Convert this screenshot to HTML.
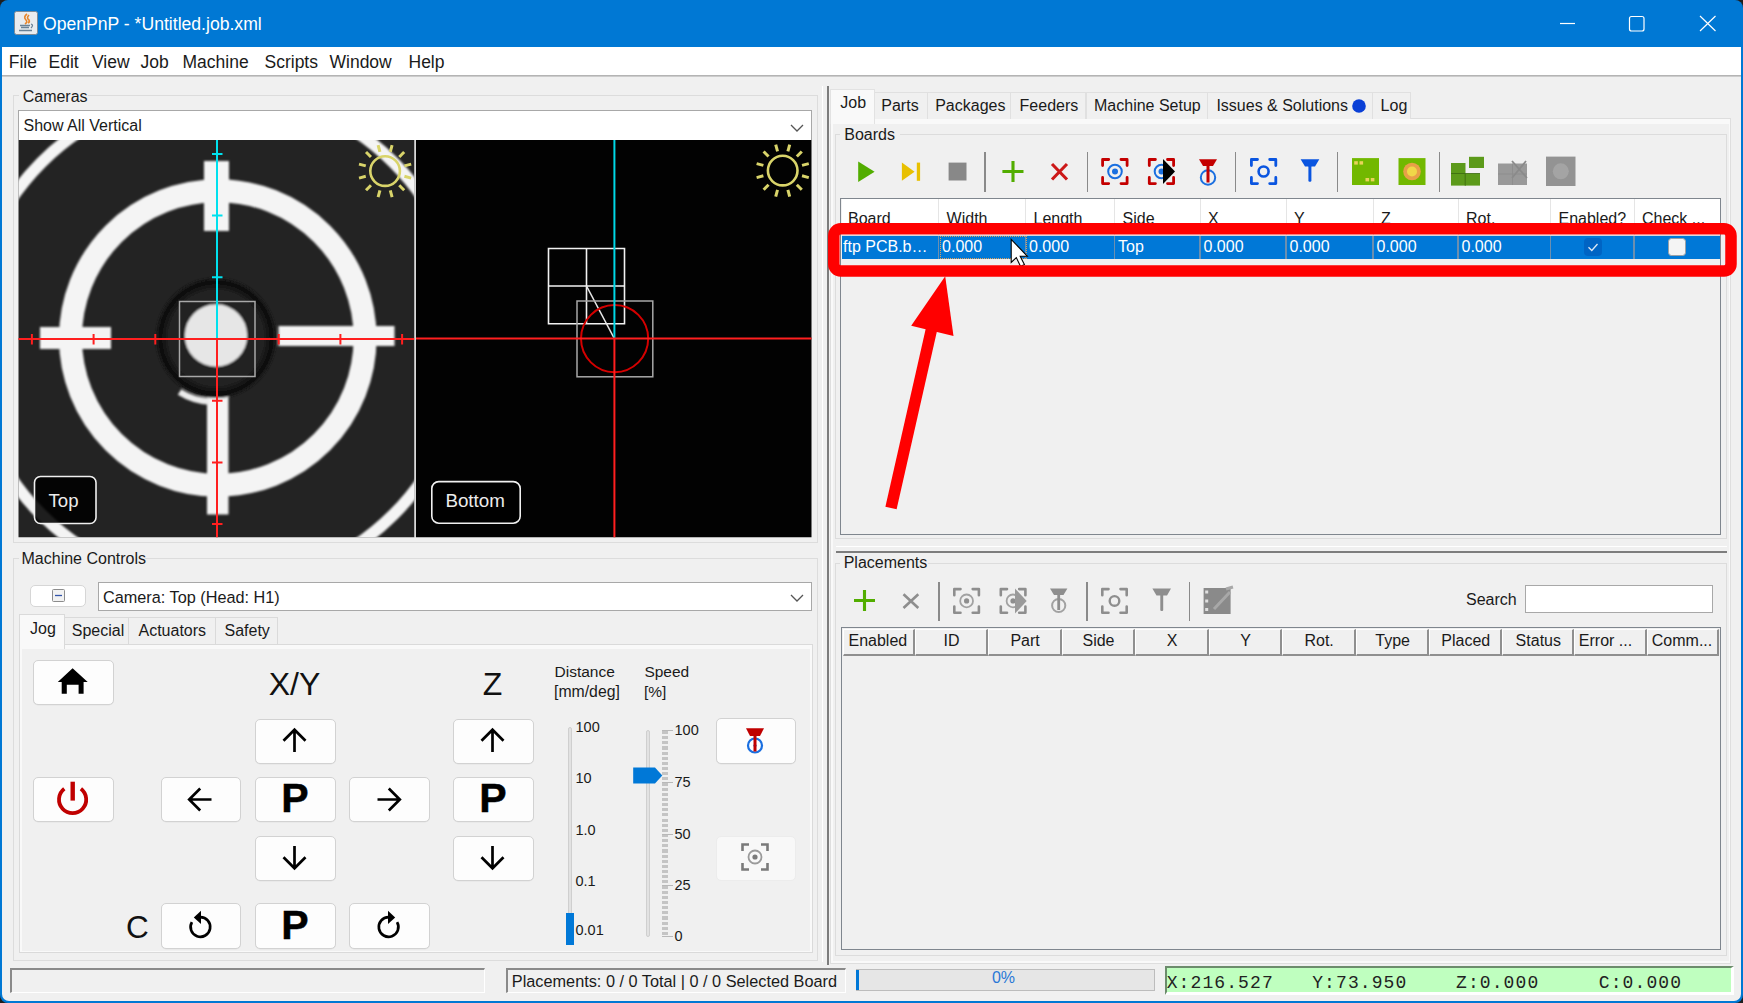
<!DOCTYPE html>
<html><head><meta charset="utf-8">
<style>
*{margin:0;padding:0;box-sizing:border-box}
html,body{width:1743px;height:1003px;overflow:hidden;background:#1e1e1e}
body{font-family:"Liberation Sans",sans-serif;font-size:16px;color:#000;position:relative}
.a{position:absolute}
.t{position:absolute;white-space:nowrap;line-height:1}
svg{position:absolute;overflow:visible}
</style></head><body>

<div class="a" style="left:0px;top:0px;width:1743px;height:1003px;background:#0078d4;border-radius:8px"></div>
<div class="a" style="left:2px;top:47px;width:1739px;height:954px;background:#f0f0f0;border-radius:0 0 7px 7px"></div>
<svg style="left:0;top:0" width="1743" height="47" viewBox="0 0 1743 47"><rect x="14.5" y="11.5" width="23" height="23" rx="2" fill="#e9ecef" stroke="#7d8b97" stroke-width="1"/><path d="M27 14 q-4 3 -1 6 q2 2 -1 4 M29 15 q-3 3 0 5 q1 2 -1 3" stroke="#e8862a" stroke-width="1.6" fill="none"/><path d="M20 25.5 h10 M21 27.5 h8 M19 30.5 h13 M31 24 q3 1 0 4" stroke="#6a8296" stroke-width="1.3" fill="none"/><line x1="1560" y1="23.5" x2="1575" y2="23.5" stroke="#fff" stroke-width="1.2"/><rect x="1629.5" y="16.5" width="14.5" height="14.5" rx="2" fill="none" stroke="#fff" stroke-width="1.2"/><path d="M1700 16 L1715.5 31 M1715.5 16 L1700 31" stroke="#fff" stroke-width="1.2"/></svg>
<div class="t" style="left:43.00px;top:16.40px;font-size:17.6px;color:#fff;font-weight:normal;font-family:'Liberation Sans',sans-serif;">OpenPnP - *Untitled.job.xml</div>
<div class="a" style="left:2px;top:47px;width:1739px;height:28px;background:#fff"></div>
<div class="a" style="left:2px;top:75px;width:1739px;height:2px;background:linear-gradient(#a8a8a8,#d8d8d8)"></div>
<div class="t" style="left:8.80px;top:53.98px;font-size:17.5px;color:#1a1a1a;font-weight:normal;font-family:'Liberation Sans',sans-serif;">File</div>
<div class="t" style="left:48.50px;top:53.98px;font-size:17.5px;color:#1a1a1a;font-weight:normal;font-family:'Liberation Sans',sans-serif;">Edit</div>
<div class="t" style="left:92.00px;top:53.98px;font-size:17.5px;color:#1a1a1a;font-weight:normal;font-family:'Liberation Sans',sans-serif;">View</div>
<div class="t" style="left:140.50px;top:53.98px;font-size:17.5px;color:#1a1a1a;font-weight:normal;font-family:'Liberation Sans',sans-serif;">Job</div>
<div class="t" style="left:182.50px;top:53.98px;font-size:17.5px;color:#1a1a1a;font-weight:normal;font-family:'Liberation Sans',sans-serif;">Machine</div>
<div class="t" style="left:264.50px;top:53.98px;font-size:17.5px;color:#1a1a1a;font-weight:normal;font-family:'Liberation Sans',sans-serif;">Scripts</div>
<div class="t" style="left:329.50px;top:53.98px;font-size:17.5px;color:#1a1a1a;font-weight:normal;font-family:'Liberation Sans',sans-serif;">Window</div>
<div class="t" style="left:408.50px;top:53.98px;font-size:17.5px;color:#1a1a1a;font-weight:normal;font-family:'Liberation Sans',sans-serif;">Help</div>
<div class="a" style="left:13px;top:95px;width:805px;height:448px;border:1px solid #dcdcdc"></div>
<div class="a" style="left:19px;top:90px;width:69px;height:10px;background:#f0f0f0"></div>
<div class="t" style="left:22.70px;top:88.75px;font-size:16px;color:#1a1a1a;font-weight:normal;font-family:'Liberation Sans',sans-serif;">Cameras</div>
<div class="a" style="left:18px;top:110px;width:794px;height:30px;background:#fff;border:1px solid #a8a8a8;border-bottom:0"></div>
<div class="t" style="left:23.50px;top:118.45px;font-size:16px;color:#1a1a1a;font-weight:normal;font-family:'Liberation Sans',sans-serif;">Show All Vertical</div>
<svg style="left:0;top:0" width="1" height="1"><path d="M791 125 L797 131 L803 125" stroke="#555" stroke-width="1.3" fill="none"/></svg>
<svg style="left:0;top:0" width="1743" height="1003" viewBox="0 0 1743 1003"><defs><clipPath id="c1"><rect x="18.5" y="140" width="396" height="397.3"/></clipPath><clipPath id="c2"><rect x="416" y="140" width="395.5" height="397.3"/></clipPath><filter id="bl" x="-10%" y="-10%" width="120%" height="120%"><feGaussianBlur stdDeviation="1.2"/></filter><radialGradient id="hole" cx="0.5" cy="0.5" r="0.5"><stop offset="0.8" stop-color="#202020"/><stop offset="0.93" stop-color="#0c0c0c"/><stop offset="1" stop-color="#1a1a1a"/></radialGradient></defs><g clip-path="url(#c1)"><rect x="18" y="140" width="397" height="398" fill="#232323"/><g filter="url(#bl)"><circle cx="217.5" cy="338.5" r="249" fill="none" stroke="#f4f4f4" stroke-width="12"/><circle cx="217.8" cy="338" r="147.3" fill="none" stroke="#f4f4f4" stroke-width="23"/><rect x="204" y="161" width="25" height="70" fill="#f4f4f4"/><rect x="40" y="327" width="71" height="22" fill="#f4f4f4"/><rect x="278.5" y="326" width="116" height="20" fill="#f4f4f4"/><rect x="207" y="380" width="21.5" height="134.5" fill="#f4f4f4"/><circle cx="216" cy="338" r="60" fill="url(#hole)"/><circle cx="216" cy="335.5" r="31.2" fill="#e6e6e6"/><path d="M179.5 392 A64 64 0 0 0 209 401.5" fill="none" stroke="#ececec" stroke-width="6.5"/></g><rect x="179.5" y="301.5" width="75.5" height="75" fill="none" stroke="#a8a8a8" stroke-width="1.5"/><line x1="217" y1="140" x2="217" y2="339" stroke="#00e1ee" stroke-width="2"/><line x1="18" y1="339" x2="415" y2="339" stroke="#ff1f1f" stroke-width="2"/><line x1="217" y1="339" x2="217" y2="538" stroke="#ff1f1f" stroke-width="2"/><line x1="212" y1="277.3" x2="222.5" y2="277.3" stroke="#00e1ee" stroke-width="2"/><line x1="212" y1="400.7" x2="222.5" y2="400.7" stroke="#ff1f1f" stroke-width="2"/><line x1="155.3" y1="334" x2="155.3" y2="344.5" stroke="#ff1f1f" stroke-width="2"/><line x1="278.7" y1="334" x2="278.7" y2="344.5" stroke="#ff1f1f" stroke-width="2"/><line x1="212" y1="215.6" x2="222.5" y2="215.6" stroke="#00e1ee" stroke-width="2"/><line x1="212" y1="462.4" x2="222.5" y2="462.4" stroke="#ff1f1f" stroke-width="2"/><line x1="93.6" y1="334" x2="93.6" y2="344.5" stroke="#ff1f1f" stroke-width="2"/><line x1="340.4" y1="334" x2="340.4" y2="344.5" stroke="#ff1f1f" stroke-width="2"/><line x1="212" y1="153.9" x2="222.5" y2="153.9" stroke="#00e1ee" stroke-width="2"/><line x1="212" y1="524.1" x2="222.5" y2="524.1" stroke="#ff1f1f" stroke-width="2"/><line x1="31.9" y1="334" x2="31.9" y2="344.5" stroke="#ff1f1f" stroke-width="2"/><line x1="402.1" y1="334" x2="402.1" y2="344.5" stroke="#ff1f1f" stroke-width="2"/><circle cx="385.1" cy="171.1" r="14.8" fill="none" stroke="#d9d46a" stroke-width="2.6"/><line x1="404.42" y1="176.28" x2="411.18" y2="178.09" stroke="#d9d46a" stroke-width="3"/><line x1="399.24" y1="185.24" x2="404.19" y2="190.19" stroke="#d9d46a" stroke-width="3"/><line x1="390.28" y1="190.42" x2="392.09" y2="197.18" stroke="#d9d46a" stroke-width="3"/><line x1="379.92" y1="190.42" x2="378.11" y2="197.18" stroke="#d9d46a" stroke-width="3"/><line x1="370.96" y1="185.24" x2="366.01" y2="190.19" stroke="#d9d46a" stroke-width="3"/><line x1="365.78" y1="176.28" x2="359.02" y2="178.09" stroke="#d9d46a" stroke-width="3"/><line x1="365.78" y1="165.92" x2="359.02" y2="164.11" stroke="#d9d46a" stroke-width="3"/><line x1="370.96" y1="156.96" x2="366.01" y2="152.01" stroke="#d9d46a" stroke-width="3"/><line x1="379.92" y1="151.78" x2="378.11" y2="145.02" stroke="#d9d46a" stroke-width="3"/><line x1="390.28" y1="151.78" x2="392.09" y2="145.02" stroke="#d9d46a" stroke-width="3"/><line x1="399.24" y1="156.96" x2="404.19" y2="152.01" stroke="#d9d46a" stroke-width="3"/><line x1="404.42" y1="165.92" x2="411.18" y2="164.11" stroke="#d9d46a" stroke-width="3"/><rect x="34.5" y="476.5" width="61.5" height="47" rx="6" fill="rgba(0,0,0,0.88)" stroke="#f0f0f0" stroke-width="1.6"/></g><rect x="414.5" y="140" width="1.6" height="397.3" fill="#d8d8d8"/><g clip-path="url(#c2)"><rect x="416" y="140" width="396" height="398" fill="#020202"/><path d="M548.5 248.5 H624.5 V323.8 H548.5 Z M586.5 248.5 V323.8 M548.5 286 H624.5" fill="none" stroke="#f2f2f2" stroke-width="1.6"/><line x1="586.5" y1="286" x2="614.3" y2="338.5" stroke="#e8e8e8" stroke-width="1.6"/><rect x="577" y="301" width="75.8" height="75.8" fill="none" stroke="#a8a8a8" stroke-width="1.5"/><circle cx="614.6" cy="338.6" r="33.6" fill="none" stroke="#d40000" stroke-width="2"/><line x1="614.4" y1="140" x2="614.4" y2="338.5" stroke="#00d8e6" stroke-width="2"/><line x1="416" y1="338.5" x2="812" y2="338.5" stroke="#ff1f1f" stroke-width="2"/><line x1="614.4" y1="338.5" x2="614.4" y2="538" stroke="#ff1f1f" stroke-width="2"/><circle cx="782.7" cy="170.6" r="14.8" fill="none" stroke="#d9d46a" stroke-width="2.6"/><line x1="802.02" y1="175.78" x2="808.78" y2="177.59" stroke="#d9d46a" stroke-width="3"/><line x1="796.84" y1="184.74" x2="801.79" y2="189.69" stroke="#d9d46a" stroke-width="3"/><line x1="787.88" y1="189.92" x2="789.69" y2="196.68" stroke="#d9d46a" stroke-width="3"/><line x1="777.52" y1="189.92" x2="775.71" y2="196.68" stroke="#d9d46a" stroke-width="3"/><line x1="768.56" y1="184.74" x2="763.61" y2="189.69" stroke="#d9d46a" stroke-width="3"/><line x1="763.38" y1="175.78" x2="756.62" y2="177.59" stroke="#d9d46a" stroke-width="3"/><line x1="763.38" y1="165.42" x2="756.62" y2="163.61" stroke="#d9d46a" stroke-width="3"/><line x1="768.56" y1="156.46" x2="763.61" y2="151.51" stroke="#d9d46a" stroke-width="3"/><line x1="777.52" y1="151.28" x2="775.71" y2="144.52" stroke="#d9d46a" stroke-width="3"/><line x1="787.88" y1="151.28" x2="789.69" y2="144.52" stroke="#d9d46a" stroke-width="3"/><line x1="796.84" y1="156.46" x2="801.79" y2="151.51" stroke="#d9d46a" stroke-width="3"/><line x1="802.02" y1="165.42" x2="808.78" y2="163.61" stroke="#d9d46a" stroke-width="3"/><rect x="431.8" y="481.6" width="88.4" height="41.6" rx="7" fill="#000" stroke="#f0f0f0" stroke-width="1.6"/></g></svg>
<div class="t" style="left:48.50px;top:492.15px;font-size:18.6px;color:#ececec;font-weight:normal;font-family:'Liberation Sans',sans-serif;">Top</div>
<div class="t" style="left:445.40px;top:491.98px;font-size:18.8px;color:#ececec;font-weight:normal;font-family:'Liberation Sans',sans-serif;">Bottom</div>
<div class="a" style="left:13px;top:558px;width:805px;height:403px;border:1px solid #dcdcdc"></div>
<div class="a" style="left:19px;top:552px;width:126px;height:12px;background:#f0f0f0"></div>
<div class="t" style="left:21.50px;top:550.95px;font-size:16px;color:#1a1a1a;font-weight:normal;font-family:'Liberation Sans',sans-serif;">Machine Controls</div>
<div class="a" style="left:30px;top:585px;width:56px;height:22px;background:#fff;border:1px solid #d6d6d6;border-radius:5px"></div>
<svg style="left:0;top:0" width="1" height="1"><rect x="52.5" y="589.5" width="12" height="12" rx="1" fill="#f2f2f2" stroke="#8c8c8c" stroke-width="1"/><line x1="55" y1="595.5" x2="62" y2="595.5" stroke="#3355aa" stroke-width="1.3"/></svg>
<div class="a" style="left:98px;top:581.5px;width:714px;height:29.5px;background:#fff;border:1px solid #a8a8a8"></div>
<div class="t" style="left:103.00px;top:589.24px;font-size:16.25px;color:#1a1a1a;font-weight:normal;font-family:'Liberation Sans',sans-serif;">Camera: Top (Head: H1)</div>
<svg style="left:0;top:0" width="1" height="1"><path d="M791 595 L797 601 L803 595" stroke="#555" stroke-width="1.3" fill="none"/></svg>
<div class="a" style="left:19px;top:643.5px;width:793.5px;height:309.5px;background:#f9f9f9;border:1px solid #dadada"></div>
<div class="a" style="left:21.5px;top:648.5px;width:788.0px;height:302.0px;background:#f0f0f0"></div>
<div class="a" style="left:64px;top:616.5px;width:64.5px;height:27.5px;background:#f0f0f0;border:1px solid #dadada;border-bottom:0"></div>
<div class="a" style="left:128px;top:616.5px;width:87.5px;height:27.5px;background:#f0f0f0;border:1px solid #dadada;border-bottom:0"></div>
<div class="a" style="left:215px;top:616.5px;width:62.5px;height:27.5px;background:#f0f0f0;border:1px solid #dadada;border-bottom:0"></div>
<div class="a" style="left:19px;top:613.5px;width:45.5px;height:35.0px;background:#f9f9f9;border:1px solid #dadada;border-bottom:0"></div>
<div class="t" style="left:30.00px;top:621.15px;font-size:16px;color:#1a1a1a;font-weight:normal;font-family:'Liberation Sans',sans-serif;">Jog</div>
<div class="t" style="left:71.80px;top:622.75px;font-size:16px;color:#1a1a1a;font-weight:normal;font-family:'Liberation Sans',sans-serif;">Special</div>
<div class="t" style="left:138.50px;top:622.75px;font-size:16px;color:#1a1a1a;font-weight:normal;font-family:'Liberation Sans',sans-serif;">Actuators</div>
<div class="t" style="left:224.50px;top:622.75px;font-size:16px;color:#1a1a1a;font-weight:normal;font-family:'Liberation Sans',sans-serif;">Safety</div>
<div class="a" style="left:33px;top:660px;width:80.5px;height:45.299999999999955px;background:#fdfdfd;border:1px solid #d2d2d2;border-radius:5px;box-shadow:0 0.5px 0.5px rgba(0,0,0,0.06)"></div>
<div class="a" style="left:255px;top:718.5px;width:80.5px;height:45.299999999999955px;background:#fdfdfd;border:1px solid #d2d2d2;border-radius:5px;box-shadow:0 0.5px 0.5px rgba(0,0,0,0.06)"></div>
<div class="a" style="left:453px;top:718.5px;width:80.5px;height:45.299999999999955px;background:#fdfdfd;border:1px solid #d2d2d2;border-radius:5px;box-shadow:0 0.5px 0.5px rgba(0,0,0,0.06)"></div>
<div class="a" style="left:33px;top:777.2px;width:80.5px;height:45.299999999999955px;background:#fdfdfd;border:1px solid #d2d2d2;border-radius:5px;box-shadow:0 0.5px 0.5px rgba(0,0,0,0.06)"></div>
<div class="a" style="left:160.5px;top:777.2px;width:80.5px;height:45.299999999999955px;background:#fdfdfd;border:1px solid #d2d2d2;border-radius:5px;box-shadow:0 0.5px 0.5px rgba(0,0,0,0.06)"></div>
<div class="a" style="left:255px;top:777.2px;width:80.5px;height:45.299999999999955px;background:#fdfdfd;border:1px solid #d2d2d2;border-radius:5px;box-shadow:0 0.5px 0.5px rgba(0,0,0,0.06)"></div>
<div class="a" style="left:349.3px;top:777.2px;width:80.5px;height:45.299999999999955px;background:#fdfdfd;border:1px solid #d2d2d2;border-radius:5px;box-shadow:0 0.5px 0.5px rgba(0,0,0,0.06)"></div>
<div class="a" style="left:453px;top:777.2px;width:80.5px;height:45.299999999999955px;background:#fdfdfd;border:1px solid #d2d2d2;border-radius:5px;box-shadow:0 0.5px 0.5px rgba(0,0,0,0.06)"></div>
<div class="a" style="left:255px;top:835.5px;width:80.5px;height:45.299999999999955px;background:#fdfdfd;border:1px solid #d2d2d2;border-radius:5px;box-shadow:0 0.5px 0.5px rgba(0,0,0,0.06)"></div>
<div class="a" style="left:453px;top:835.5px;width:80.5px;height:45.299999999999955px;background:#fdfdfd;border:1px solid #d2d2d2;border-radius:5px;box-shadow:0 0.5px 0.5px rgba(0,0,0,0.06)"></div>
<div class="a" style="left:160.5px;top:903.3px;width:80.5px;height:45.299999999999955px;background:#fdfdfd;border:1px solid #d2d2d2;border-radius:5px;box-shadow:0 0.5px 0.5px rgba(0,0,0,0.06)"></div>
<div class="a" style="left:255px;top:903.3px;width:80.5px;height:45.299999999999955px;background:#fdfdfd;border:1px solid #d2d2d2;border-radius:5px;box-shadow:0 0.5px 0.5px rgba(0,0,0,0.06)"></div>
<div class="a" style="left:349.3px;top:903.3px;width:80.5px;height:45.299999999999955px;background:#fdfdfd;border:1px solid #d2d2d2;border-radius:5px;box-shadow:0 0.5px 0.5px rgba(0,0,0,0.06)"></div>
<div class="a" style="left:715.6px;top:718.3px;width:80.5px;height:45.299999999999955px;background:#fdfdfd;border:1px solid #d2d2d2;border-radius:5px;box-shadow:0 0.5px 0.5px rgba(0,0,0,0.06)"></div>
<div class="a" style="left:715.6px;top:835.6px;width:80.5px;height:45.299999999999955px;background:#f8f8f8;border:1px solid #ececec;border-radius:5px"></div>
<div class="t" style="left:-5.50px;width:600px;text-align:center;top:668.31px;font-size:32px;color:#111;font-weight:normal;font-family:'Liberation Sans',sans-serif;">X/Y</div>
<div class="t" style="left:192.50px;width:600px;text-align:center;top:668.31px;font-size:32px;color:#111;font-weight:normal;font-family:'Liberation Sans',sans-serif;">Z</div>
<div class="t" style="left:126.00px;top:911.53px;font-size:31.5px;color:#111;font-weight:normal;font-family:'Liberation Sans',sans-serif;">C</div>
<div class="t" style="left:-5.00px;width:600px;text-align:center;top:778.29px;font-size:41px;color:#000;font-weight:bold;font-family:'Liberation Sans',sans-serif;-webkit-text-stroke:0.5px #000">P</div>
<div class="t" style="left:193.00px;width:600px;text-align:center;top:778.29px;font-size:41px;color:#000;font-weight:bold;font-family:'Liberation Sans',sans-serif;-webkit-text-stroke:0.5px #000">P</div>
<div class="t" style="left:-5.00px;width:600px;text-align:center;top:904.79px;font-size:41px;color:#000;font-weight:bold;font-family:'Liberation Sans',sans-serif;-webkit-text-stroke:0.5px #000">P</div>
<svg style="left:0;top:0" width="1" height="1"><path d="M72.6 668.2 L57.8 682 H61.7 V693.7 H66.8 V684.7 H78.6 V693.7 H83.6 V682 H87.7 Z" fill="#000"/><g transform="translate(294.5,740.5) rotate(0)"><path d="M0 -10.5 V11.5 M-11 0.2 L0 -10.8 L11 0.2" fill="none" stroke="#000" stroke-width="2.7" stroke-linejoin="miter"/></g><g transform="translate(492.5,740.5) rotate(0)"><path d="M0 -10.5 V11.5 M-11 0.2 L0 -10.8 L11 0.2" fill="none" stroke="#000" stroke-width="2.7" stroke-linejoin="miter"/></g><g transform="translate(294.5,857.5) rotate(180)"><path d="M0 -10.5 V11.5 M-11 0.2 L0 -10.8 L11 0.2" fill="none" stroke="#000" stroke-width="2.7" stroke-linejoin="miter"/></g><g transform="translate(492.5,857.5) rotate(180)"><path d="M0 -10.5 V11.5 M-11 0.2 L0 -10.8 L11 0.2" fill="none" stroke="#000" stroke-width="2.7" stroke-linejoin="miter"/></g><g transform="translate(200,799.5) rotate(-90)"><path d="M0 -10.5 V11.5 M-11 0.2 L0 -10.8 L11 0.2" fill="none" stroke="#000" stroke-width="2.7" stroke-linejoin="miter"/></g><g transform="translate(389,799.5) rotate(90)"><path d="M0 -10.5 V11.5 M-11 0.2 L0 -10.8 L11 0.2" fill="none" stroke="#000" stroke-width="2.7" stroke-linejoin="miter"/></g><path d="M64.3 788.8 A13.6 13.6 0 1 0 80.9 788.8" fill="none" stroke="#c00000" stroke-width="3.8"/><line x1="72.7" y1="781.7" x2="72.7" y2="800.6" stroke="#c00000" stroke-width="4.4"/><g transform="translate(200.4,927) scale(1,1)"><path d="M0 -9.8 A9.8 9.8 0 1 1 -8.5 -4.9" fill="none" stroke="#000" stroke-width="2.7"/><path d="M0.6 -16.2 L-6.6 -9.6 L0.6 -3 Z" fill="#000"/></g><g transform="translate(388.6,927) scale(-1,1)"><path d="M0 -9.8 A9.8 9.8 0 1 1 -8.5 -4.9" fill="none" stroke="#000" stroke-width="2.7"/><path d="M0.6 -16.2 L-6.6 -9.6 L0.6 -3 Z" fill="#000"/></g><path d="M746 728.3 H764 L760 736 H750 Z" fill="#c00000"/><circle cx="755" cy="745.5" r="7" fill="none" stroke="#1a6fe0" stroke-width="2.2"/><circle cx="755" cy="745.5" r="1.6" fill="#1a6fe0"/><rect x="753.5" y="735" width="3" height="16.5" fill="#c00000"/><path d="M742.5 851 V844.5 H749 M761 844.5 H767.5 V851 M767.5 863 V869.5 H761 M749 869.5 H742.5 V863" fill="none" stroke="#7a7a7a" stroke-width="2.6"/><circle cx="755" cy="857" r="6.5" fill="none" stroke="#9a9a9a" stroke-width="1.8"/><circle cx="755" cy="857" r="2.6" fill="#7a7a7a"/></svg>
<div class="t" style="left:554.50px;top:664.18px;font-size:15.5px;color:#1a1a1a;font-weight:normal;font-family:'Liberation Sans',sans-serif;">Distance</div>
<div class="t" style="left:554.00px;top:684.22px;font-size:15.8px;color:#1a1a1a;font-weight:normal;font-family:'Liberation Sans',sans-serif;">[mm/deg]</div>
<div class="t" style="left:644.40px;top:664.18px;font-size:15.5px;color:#1a1a1a;font-weight:normal;font-family:'Liberation Sans',sans-serif;">Speed</div>
<div class="t" style="left:644.00px;top:684.48px;font-size:15.5px;color:#1a1a1a;font-weight:normal;font-family:'Liberation Sans',sans-serif;">[%]</div>
<div class="a" style="left:567.5px;top:727px;width:4.5px;height:217px;background:#e2e2e2;border:1px solid #cfcfcf;border-radius:2px"></div>
<div class="a" style="left:566px;top:912.7px;width:7.600000000000023px;height:31.899999999999977px;background:#0078d7"></div>
<div class="t" style="left:575.50px;top:720.22px;font-size:14.5px;color:#1a1a1a;font-weight:normal;font-family:'Liberation Sans',sans-serif;">100</div>
<div class="t" style="left:575.50px;top:771.22px;font-size:14.5px;color:#1a1a1a;font-weight:normal;font-family:'Liberation Sans',sans-serif;">10</div>
<div class="t" style="left:575.50px;top:822.92px;font-size:14.5px;color:#1a1a1a;font-weight:normal;font-family:'Liberation Sans',sans-serif;">1.0</div>
<div class="t" style="left:575.50px;top:873.92px;font-size:14.5px;color:#1a1a1a;font-weight:normal;font-family:'Liberation Sans',sans-serif;">0.1</div>
<div class="t" style="left:575.50px;top:923.02px;font-size:14.5px;color:#1a1a1a;font-weight:normal;font-family:'Liberation Sans',sans-serif;">0.01</div>
<div class="a" style="left:645.5px;top:730px;width:4.5px;height:207px;background:#e2e2e2;border:1px solid #cfcfcf;border-radius:2px"></div>
<div class="a" style="left:662px;top:731px;width:6px;height:206px;background:repeating-linear-gradient(#c4c4c4 0 3.1px,transparent 3.1px 5.15px)"></div>
<div class="t" style="left:674.50px;top:723.02px;font-size:14.5px;color:#1a1a1a;font-weight:normal;font-family:'Liberation Sans',sans-serif;">100</div>
<div class="a" style="left:662px;top:730.3px;width:10.5px;height:1.2000000000000455px;background:#b8b8b8"></div>
<div class="t" style="left:674.50px;top:774.72px;font-size:14.5px;color:#1a1a1a;font-weight:normal;font-family:'Liberation Sans',sans-serif;">75</div>
<div class="a" style="left:662px;top:782.3px;width:10.5px;height:1.2000000000000455px;background:#b8b8b8"></div>
<div class="t" style="left:674.50px;top:827.12px;font-size:14.5px;color:#1a1a1a;font-weight:normal;font-family:'Liberation Sans',sans-serif;">50</div>
<div class="a" style="left:662px;top:833.8px;width:10.5px;height:1.2000000000000455px;background:#b8b8b8"></div>
<div class="t" style="left:674.50px;top:878.12px;font-size:14.5px;color:#1a1a1a;font-weight:normal;font-family:'Liberation Sans',sans-serif;">25</div>
<div class="a" style="left:662px;top:885.1px;width:10.5px;height:1.2000000000000455px;background:#b8b8b8"></div>
<div class="t" style="left:674.50px;top:929.12px;font-size:14.5px;color:#1a1a1a;font-weight:normal;font-family:'Liberation Sans',sans-serif;">0</div>
<div class="a" style="left:662px;top:936.0px;width:10.5px;height:1.2000000000000455px;background:#b8b8b8"></div>
<svg style="left:0;top:0" width="1" height="1"><path d="M633.2 767.4 H655 L662.3 775.5 L655 783.5 H633.2 Z" fill="#0078d7"/></svg>
<div class="a" style="left:821.5px;top:86px;width:1.2999999999999545px;height:876px;background:#ffffff"></div>
<div class="a" style="left:827px;top:86px;width:1.6000000000000227px;height:879px;background:#7d7d7d"></div>
<div class="a" style="left:830px;top:118px;width:901px;height:845.5px;background:#f9f9f9;border:1px solid #dedede"></div>
<div class="a" style="left:832.5px;top:123.5px;width:896.0px;height:837.0px;background:#f0f0f0"></div>
<div class="a" style="left:874px;top:91.5px;width:53.5px;height:27.0px;background:#f0f0f0;border:1px solid #e0e0e0;border-bottom:0"></div>
<div class="t" style="left:881.30px;top:98.25px;font-size:16px;color:#1a1a1a;font-weight:normal;font-family:'Liberation Sans',sans-serif;">Parts</div>
<div class="a" style="left:927px;top:91.5px;width:83.89999999999998px;height:27.0px;background:#f0f0f0;border:1px solid #e0e0e0;border-bottom:0"></div>
<div class="t" style="left:935.20px;top:98.25px;font-size:16px;color:#1a1a1a;font-weight:normal;font-family:'Liberation Sans',sans-serif;">Packages</div>
<div class="a" style="left:1010px;top:91.5px;width:76.09999999999991px;height:27.0px;background:#f0f0f0;border:1px solid #e0e0e0;border-bottom:0"></div>
<div class="t" style="left:1019.60px;top:98.25px;font-size:16px;color:#1a1a1a;font-weight:normal;font-family:'Liberation Sans',sans-serif;">Feeders</div>
<div class="a" style="left:1085.6px;top:91.5px;width:122.20000000000005px;height:27.0px;background:#f0f0f0;border:1px solid #e0e0e0;border-bottom:0"></div>
<div class="t" style="left:1094.00px;top:98.25px;font-size:16px;color:#1a1a1a;font-weight:normal;font-family:'Liberation Sans',sans-serif;">Machine Setup</div>
<div class="a" style="left:1207.3px;top:91.5px;width:165.60000000000014px;height:27.0px;background:#f0f0f0;border:1px solid #e0e0e0;border-bottom:0"></div>
<div class="t" style="left:1216.40px;top:98.25px;font-size:16px;color:#1a1a1a;font-weight:normal;font-family:'Liberation Sans',sans-serif;">Issues &amp; Solutions</div>
<div class="a" style="left:1372.4px;top:91.5px;width:39.09999999999991px;height:27.0px;background:#f0f0f0;border:1px solid #e0e0e0;border-bottom:0"></div>
<div class="t" style="left:1380.60px;top:98.25px;font-size:16px;color:#1a1a1a;font-weight:normal;font-family:'Liberation Sans',sans-serif;">Log</div>
<div class="a" style="left:829.5px;top:89px;width:45.0px;height:35px;background:#f9f9f9;border:1px solid #e2e2e2;border-bottom:0"></div>
<div class="t" style="left:840.30px;top:94.75px;font-size:16px;color:#1a1a1a;font-weight:normal;font-family:'Liberation Sans',sans-serif;">Job</div>
<svg style="left:0;top:0" width="1" height="1"><circle cx="1359" cy="106" r="6.8" fill="#0a3fd6"/></svg>
<div class="a" style="left:835px;top:133.5px;width:891.5px;height:405.5px;border:1px solid #dcdcdc"></div>
<div class="a" style="left:840px;top:128px;width:60px;height:12px;background:#f0f0f0"></div>
<div class="t" style="left:844.30px;top:126.95px;font-size:16px;color:#1a1a1a;font-weight:normal;font-family:'Liberation Sans',sans-serif;">Boards</div>
<div class="a" style="left:984.4px;top:152.2px;width:1.3999999999999773px;height:40.20000000000002px;background:#8a8a8a"></div>
<div class="a" style="left:1086.6000000000001px;top:152.2px;width:1.3999999999998636px;height:40.20000000000002px;background:#8a8a8a"></div>
<div class="a" style="left:1234.8000000000002px;top:152.2px;width:1.3999999999998636px;height:40.20000000000002px;background:#8a8a8a"></div>
<div class="a" style="left:1337.0px;top:152.2px;width:1.3999999999998636px;height:40.20000000000002px;background:#8a8a8a"></div>
<div class="a" style="left:1439.0px;top:152.2px;width:1.3999999999998636px;height:40.20000000000002px;background:#8a8a8a"></div>
<svg style="left:0;top:0" width="1" height="1"><path d="M858.2 161.4 L874.6 171.7 L858.2 182 Z" fill="#52ad00"/><path d="M901.9 162.6 L914.6 171.7 L901.9 180.8 Z" fill="#e8c000"/><rect x="916.8" y="162.6" width="3.3" height="18.2" fill="#e8c000"/><rect x="948.6" y="162.6" width="17.9" height="17.9" fill="#888"/><path d="M1002.4 171.5 H1023.5 M1013 161 V182" stroke="#52ad00" stroke-width="3.1"/><path d="M1052 164 L1067 179.5 M1067 164 L1052 179.5" stroke="#cc1818" stroke-width="3.1"/><path d="M1102.6000000000001 165.6 V159.5 H1108.7 M1121.0 159.5 H1127.1 V165.6 M1127.1 177.5 V183.6 H1121.0 M1108.7 183.6 H1102.6000000000001 V177.5" fill="none" stroke="#c40000" stroke-width="2.8" stroke-linejoin="round" stroke-linecap="round"/><circle cx="1115" cy="171.5" r="6.8" fill="none" stroke="#1a6fe0" stroke-width="2"/><circle cx="1115" cy="171.5" r="3" fill="#1a6fe0"/><path d="M1149.3000000000002 165.6 V159.5 H1155.4 M1167.5 159.5 H1173.6 V165.6 M1173.6 177.5 V183.6 H1167.5 M1155.4 183.6 H1149.3000000000002 V177.5" fill="none" stroke="#c40000" stroke-width="2.8" stroke-linejoin="round" stroke-linecap="round"/><circle cx="1161.5" cy="171.5" r="6.8" fill="none" stroke="#1a6fe0" stroke-width="2"/><circle cx="1161.5" cy="171.5" r="3" fill="#1a6fe0"/><path d="M1163 159 L1175 171.5 L1163 184 Z" fill="#000"/><path d="M1199 159.2 H1217 L1213 166 H1203 Z" fill="#c40000"/><circle cx="1208" cy="177.5" r="7.2" fill="none" stroke="#1a6fe0" stroke-width="2"/><rect x="1206.5" y="165" width="3" height="17.5" fill="#c40000"/><path d="M1251.4 165.6 V159.5 H1257.5 M1269.7 159.5 H1275.8 V165.6 M1275.8 177.5 V183.6 H1269.7 M1257.5 183.6 H1251.4 V177.5" fill="none" stroke="#0a55e0" stroke-width="2.8" stroke-linejoin="round" stroke-linecap="round"/><circle cx="1263.6" cy="171.5" r="5" fill="none" stroke="#0a55e0" stroke-width="2.6"/><path d="M1300.6 159.2 H1319.3 L1315 166.5 H1305 Z" fill="#0a55e0"/><rect x="1308.4" y="165" width="3" height="16.8" rx="1.2" fill="#0a55e0"/><rect x="1352" y="158.1" width="27" height="26.9" fill="#72b800"/><rect x="1354.2" y="161.2" width="3.6" height="3.4" fill="#e9d35a"/><rect x="1359.5" y="161.2" width="3.6" height="3.4" fill="#e9d35a"/><rect x="1365.5" y="178" width="3.6" height="3.4" fill="#e9d35a"/><rect x="1370.8" y="178" width="3.6" height="3.4" fill="#e9d35a"/><rect x="1398.5" y="158.1" width="27" height="26.9" fill="#72b800"/><circle cx="1412" cy="171.5" r="8.8" fill="#e8a048"/><circle cx="1412" cy="171.5" r="5" fill="#f0d848"/><rect x="1469" y="156.8" width="15" height="11.2" fill="#5c9a1a"/><rect x="1451" y="163" width="14.5" height="22.6" fill="#5c9a1a"/><rect x="1465" y="174" width="15" height="11.6" fill="#5c9a1a"/><path d="M1451 173.5 H1480 M1465.2 174 V185.6" stroke="#3d6e10" stroke-width="0.9"/><rect x="1498" y="163.5" width="29" height="21.5" fill="#999"/><path d="M1512 161 L1527 178 M1526 161 L1512 178" stroke="#8a8a8a" stroke-width="1.8"/><path d="M1498 174 H1527 M1512.5 163.5 V185" stroke="#8c8c8c" stroke-width="0.8"/><rect x="1546" y="156.6" width="29.5" height="29.4" fill="#939393"/><circle cx="1560.8" cy="171.3" r="8" fill="#a4a4a4"/></svg>
<div class="a" style="left:840px;top:197.5px;width:881px;height:337.0px;background:#f0f0f0;border:1.5px solid #7f868e;border-bottom:1.5px solid #7f868e"></div>
<div class="a" style="left:841.5px;top:199px;width:878.0px;height:36px;background:#fff"></div>
<div class="t" style="left:848.00px;top:210.75px;font-size:16px;color:#1a1a1a;font-weight:normal;font-family:'Liberation Sans',sans-serif;">Board</div>
<div class="a" style="left:938.1px;top:199px;width:1.0px;height:36px;background:#e5e5e5"></div>
<div class="t" style="left:946.60px;top:210.75px;font-size:16px;color:#1a1a1a;font-weight:normal;font-family:'Liberation Sans',sans-serif;">Width</div>
<div class="a" style="left:1025.0px;top:199px;width:1.0px;height:36px;background:#e5e5e5"></div>
<div class="t" style="left:1033.50px;top:210.75px;font-size:16px;color:#1a1a1a;font-weight:normal;font-family:'Liberation Sans',sans-serif;">Length</div>
<div class="a" style="left:1114.0px;top:199px;width:1.0px;height:36px;background:#e5e5e5"></div>
<div class="t" style="left:1122.50px;top:210.75px;font-size:16px;color:#1a1a1a;font-weight:normal;font-family:'Liberation Sans',sans-serif;">Side</div>
<div class="a" style="left:1199.5px;top:199px;width:1.0px;height:36px;background:#e5e5e5"></div>
<div class="t" style="left:1208.00px;top:210.75px;font-size:16px;color:#1a1a1a;font-weight:normal;font-family:'Liberation Sans',sans-serif;">X</div>
<div class="a" style="left:1285.5px;top:199px;width:1.0px;height:36px;background:#e5e5e5"></div>
<div class="t" style="left:1294.00px;top:210.75px;font-size:16px;color:#1a1a1a;font-weight:normal;font-family:'Liberation Sans',sans-serif;">Y</div>
<div class="a" style="left:1372.5px;top:199px;width:1.0px;height:36px;background:#e5e5e5"></div>
<div class="t" style="left:1381.00px;top:210.75px;font-size:16px;color:#1a1a1a;font-weight:normal;font-family:'Liberation Sans',sans-serif;">Z</div>
<div class="a" style="left:1457.5px;top:199px;width:1.0px;height:36px;background:#e5e5e5"></div>
<div class="t" style="left:1466.00px;top:210.75px;font-size:16px;color:#1a1a1a;font-weight:normal;font-family:'Liberation Sans',sans-serif;">Rot.</div>
<div class="a" style="left:1550.0px;top:199px;width:1.0px;height:36px;background:#e5e5e5"></div>
<div class="t" style="left:1558.50px;top:210.75px;font-size:16px;color:#1a1a1a;font-weight:normal;font-family:'Liberation Sans',sans-serif;">Enabled?</div>
<div class="a" style="left:1633.5px;top:199px;width:1.0px;height:36px;background:#e5e5e5"></div>
<div class="t" style="left:1642.00px;top:210.75px;font-size:16px;color:#1a1a1a;font-weight:normal;font-family:'Liberation Sans',sans-serif;">Check ...</div>
<div class="a" style="left:841.5px;top:235px;width:878.0px;height:1.3000000000000114px;background:#d9d9d9"></div>
<div class="a" style="left:841.5px;top:236.3px;width:878.0px;height:23.0px;background:#0078d7"></div>
<div class="a" style="left:938.0px;top:236.3px;width:1.3999999999999773px;height:23.0px;background:#6c8fb0"></div>
<div class="a" style="left:1024.9px;top:236.3px;width:1.3999999999998636px;height:23.0px;background:#6c8fb0"></div>
<div class="a" style="left:1113.9px;top:236.3px;width:1.3999999999998636px;height:23.0px;background:#6c8fb0"></div>
<div class="a" style="left:1199.4px;top:236.3px;width:1.3999999999998636px;height:23.0px;background:#6c8fb0"></div>
<div class="a" style="left:1285.4px;top:236.3px;width:1.3999999999998636px;height:23.0px;background:#6c8fb0"></div>
<div class="a" style="left:1372.4px;top:236.3px;width:1.3999999999998636px;height:23.0px;background:#6c8fb0"></div>
<div class="a" style="left:1457.4px;top:236.3px;width:1.3999999999998636px;height:23.0px;background:#6c8fb0"></div>
<div class="a" style="left:1549.9px;top:236.3px;width:1.3999999999998636px;height:23.0px;background:#6c8fb0"></div>
<div class="a" style="left:1633.4px;top:236.3px;width:1.3999999999998636px;height:23.0px;background:#6c8fb0"></div>
<div class="t" style="left:843.00px;top:238.85px;font-size:16px;color:#fff;font-weight:normal;font-family:'Liberation Sans',sans-serif;">ftp PCB.b…</div>
<div class="t" style="left:942.10px;top:238.85px;font-size:16px;color:#fff;font-weight:normal;font-family:'Liberation Sans',sans-serif;">0.000</div>
<div class="t" style="left:1029.00px;top:238.85px;font-size:16px;color:#fff;font-weight:normal;font-family:'Liberation Sans',sans-serif;">0.000</div>
<div class="t" style="left:1118.00px;top:238.85px;font-size:16px;color:#fff;font-weight:normal;font-family:'Liberation Sans',sans-serif;">Top</div>
<div class="t" style="left:1203.50px;top:238.85px;font-size:16px;color:#fff;font-weight:normal;font-family:'Liberation Sans',sans-serif;">0.000</div>
<div class="t" style="left:1289.50px;top:238.85px;font-size:16px;color:#fff;font-weight:normal;font-family:'Liberation Sans',sans-serif;">0.000</div>
<div class="t" style="left:1376.50px;top:238.85px;font-size:16px;color:#fff;font-weight:normal;font-family:'Liberation Sans',sans-serif;">0.000</div>
<div class="t" style="left:1461.50px;top:238.85px;font-size:16px;color:#fff;font-weight:normal;font-family:'Liberation Sans',sans-serif;">0.000</div>
<div class="a" style="left:940.4px;top:236.3px;width:86.60000000000002px;height:23.0px;border:1.3px dotted #e0a05a"></div>
<div class="a" style="left:1583.6px;top:238.4px;width:18.40000000000009px;height:17.400000000000006px;background:#0064c4;border-radius:4px"></div>
<svg style="left:0;top:0" width="1" height="1"><path d="M1588.5 247.2 L1591.8 250.5 L1597.5 244" fill="none" stroke="#dfe9f5" stroke-width="1.3"/></svg>
<div class="a" style="left:1667.6px;top:238.4px;width:18.40000000000009px;height:17.400000000000006px;background:#f4f4f4;border:1px solid #9aa0a6;border-radius:3.5px"></div>
<div class="a" style="left:836px;top:545.5px;width:891px;height:1.5px;background:#ffffff"></div>
<div class="a" style="left:836px;top:551px;width:891px;height:2px;background:#7d7d7d"></div>
<div class="a" style="left:835px;top:562.5px;width:891.5px;height:393.0px;border:1px solid #dcdcdc"></div>
<div class="a" style="left:840px;top:556px;width:88px;height:12px;background:#f0f0f0"></div>
<div class="t" style="left:843.70px;top:555.45px;font-size:16px;color:#1a1a1a;font-weight:normal;font-family:'Liberation Sans',sans-serif;">Placements</div>
<div class="a" style="left:938.3px;top:582px;width:1.3999999999999773px;height:39px;background:#8a8a8a"></div>
<div class="a" style="left:1086.4px;top:582px;width:1.3999999999998636px;height:39px;background:#8a8a8a"></div>
<div class="a" style="left:1189.1000000000001px;top:582px;width:1.3999999999998636px;height:39px;background:#8a8a8a"></div>
<svg style="left:0;top:0" width="1" height="1"><path d="M854 600.5 H875 M864.5 590 V611" stroke="#52ad00" stroke-width="3.1"/><path d="M903.5 594.3 L918.3 608 M918.3 594.3 L903.5 608" stroke="#8e8e8e" stroke-width="2.6"/><path d="M954.3 595.3 V589.0999999999999 H960.5 M972.7 589.0999999999999 H978.9000000000001 V595.3 M978.9000000000001 606.5 V612.7 H972.7 M960.5 612.7 H954.3 V606.5" fill="none" stroke="#8e8e8e" stroke-width="2.6" stroke-linejoin="round" stroke-linecap="round"/><circle cx="966.6" cy="600.9" r="6.4" fill="none" stroke="#a2a2a2" stroke-width="1.8"/><circle cx="966.6" cy="600.9" r="2.6" fill="#8e8e8e"/><path d="M1000.8 595.3 V589.0999999999999 H1007.0 M1019.2 589.0999999999999 H1025.4 V595.3 M1025.4 606.5 V612.7 H1019.2 M1007.0 612.7 H1000.8 V606.5" fill="none" stroke="#8e8e8e" stroke-width="2.6" stroke-linejoin="round" stroke-linecap="round"/><circle cx="1013" cy="600.9" r="6.4" fill="none" stroke="#a2a2a2" stroke-width="1.8"/><circle cx="1013" cy="600.9" r="2.6" fill="#8e8e8e"/><path d="M1015 588.5 L1026.7 600.9 L1015 613.5 Z" fill="#9a9a9a"/><path d="M1050 588.5 H1067.4 L1063.5 595 H1054 Z" fill="#8e8e8e"/><circle cx="1058.7" cy="605.5" r="6.6" fill="none" stroke="#a2a2a2" stroke-width="2"/><rect x="1057.3" y="594" width="2.8" height="16" fill="#8e8e8e"/><path d="M1102.3 595.3 V589.0999999999999 H1108.5 M1120.5 589.0999999999999 H1126.7 V595.3 M1126.7 606.5 V612.7 H1120.5 M1108.5 612.7 H1102.3 V606.5" fill="none" stroke="#8e8e8e" stroke-width="2.6" stroke-linejoin="round" stroke-linecap="round"/><circle cx="1114.5" cy="600.9" r="4.8" fill="none" stroke="#8e8e8e" stroke-width="2.4"/><path d="M1152.4 588.5 H1171 L1167 595.5 H1156.5 Z" fill="#8e8e8e"/><rect x="1160.3" y="594" width="2.9" height="17" rx="1.1" fill="#8e8e8e"/><rect x="1203.6" y="588" width="27" height="26" fill="#8a8a8a"/><rect x="1205.2" y="590.5" width="3" height="3" fill="#e0e0e0"/><rect x="1205.2" y="599.5" width="3" height="3" fill="#e0e0e0"/><rect x="1205.2" y="608" width="3" height="3" fill="#e0e0e0"/><path d="M1214 609 L1230 592 M1226 589 L1233 587" stroke="#a8a8a8" stroke-width="3"/></svg>
<div class="t" style="left:1466.00px;top:591.95px;font-size:16px;color:#1a1a1a;font-weight:normal;font-family:'Liberation Sans',sans-serif;">Search</div>
<div class="a" style="left:1524.5px;top:585.3px;width:188.5px;height:28.200000000000045px;background:#fff;border:1px solid #a8a8a8"></div>
<div class="a" style="left:841px;top:627.3px;width:880px;height:322.70000000000005px;background:#f0f0f0;border:1.5px solid #7f868e"></div>
<div class="a" style="left:842.5px;top:628.8px;width:72.0px;height:27.0px;background:#f0f0f0;border-top:1px solid #fff;border-left:1px solid #fff;border-right:2px solid #8f8f8f;border-bottom:2px solid #8f8f8f"></div>
<div class="t" style="left:848.50px;top:633.45px;font-size:16px;color:#1a1a1a;font-weight:normal;font-family:'Liberation Sans',sans-serif;">Enabled</div>
<div class="a" style="left:914.5px;top:628.8px;width:73.89999999999998px;height:27.0px;background:#f0f0f0;border-top:1px solid #fff;border-left:1px solid #fff;border-right:2px solid #8f8f8f;border-bottom:2px solid #8f8f8f"></div>
<div class="t" style="left:651.45px;width:600px;text-align:center;top:633.45px;font-size:16px;color:#1a1a1a;font-weight:normal;font-family:'Liberation Sans',sans-serif;">ID</div>
<div class="a" style="left:988.4px;top:628.8px;width:73.30000000000007px;height:27.0px;background:#f0f0f0;border-top:1px solid #fff;border-left:1px solid #fff;border-right:2px solid #8f8f8f;border-bottom:2px solid #8f8f8f"></div>
<div class="t" style="left:725.05px;width:600px;text-align:center;top:633.45px;font-size:16px;color:#1a1a1a;font-weight:normal;font-family:'Liberation Sans',sans-serif;">Part</div>
<div class="a" style="left:1061.7px;top:628.8px;width:73.59999999999991px;height:27.0px;background:#f0f0f0;border-top:1px solid #fff;border-left:1px solid #fff;border-right:2px solid #8f8f8f;border-bottom:2px solid #8f8f8f"></div>
<div class="t" style="left:798.50px;width:600px;text-align:center;top:633.45px;font-size:16px;color:#1a1a1a;font-weight:normal;font-family:'Liberation Sans',sans-serif;">Side</div>
<div class="a" style="left:1135.3px;top:628.8px;width:73.40000000000009px;height:27.0px;background:#f0f0f0;border-top:1px solid #fff;border-left:1px solid #fff;border-right:2px solid #8f8f8f;border-bottom:2px solid #8f8f8f"></div>
<div class="t" style="left:872.00px;width:600px;text-align:center;top:633.45px;font-size:16px;color:#1a1a1a;font-weight:normal;font-family:'Liberation Sans',sans-serif;">X</div>
<div class="a" style="left:1208.7px;top:628.8px;width:73.59999999999991px;height:27.0px;background:#f0f0f0;border-top:1px solid #fff;border-left:1px solid #fff;border-right:2px solid #8f8f8f;border-bottom:2px solid #8f8f8f"></div>
<div class="t" style="left:945.50px;width:600px;text-align:center;top:633.45px;font-size:16px;color:#1a1a1a;font-weight:normal;font-family:'Liberation Sans',sans-serif;">Y</div>
<div class="a" style="left:1282.3px;top:628.8px;width:73.70000000000005px;height:27.0px;background:#f0f0f0;border-top:1px solid #fff;border-left:1px solid #fff;border-right:2px solid #8f8f8f;border-bottom:2px solid #8f8f8f"></div>
<div class="t" style="left:1019.15px;width:600px;text-align:center;top:633.45px;font-size:16px;color:#1a1a1a;font-weight:normal;font-family:'Liberation Sans',sans-serif;">Rot.</div>
<div class="a" style="left:1356px;top:628.8px;width:73.29999999999995px;height:27.0px;background:#f0f0f0;border-top:1px solid #fff;border-left:1px solid #fff;border-right:2px solid #8f8f8f;border-bottom:2px solid #8f8f8f"></div>
<div class="t" style="left:1092.65px;width:600px;text-align:center;top:633.45px;font-size:16px;color:#1a1a1a;font-weight:normal;font-family:'Liberation Sans',sans-serif;">Type</div>
<div class="a" style="left:1429.3px;top:628.8px;width:73.0px;height:27.0px;background:#f0f0f0;border-top:1px solid #fff;border-left:1px solid #fff;border-right:2px solid #8f8f8f;border-bottom:2px solid #8f8f8f"></div>
<div class="t" style="left:1165.80px;width:600px;text-align:center;top:633.45px;font-size:16px;color:#1a1a1a;font-weight:normal;font-family:'Liberation Sans',sans-serif;">Placed</div>
<div class="a" style="left:1502.3px;top:628.8px;width:72.0px;height:27.0px;background:#f0f0f0;border-top:1px solid #fff;border-left:1px solid #fff;border-right:2px solid #8f8f8f;border-bottom:2px solid #8f8f8f"></div>
<div class="t" style="left:1238.30px;width:600px;text-align:center;top:633.45px;font-size:16px;color:#1a1a1a;font-weight:normal;font-family:'Liberation Sans',sans-serif;">Status</div>
<div class="a" style="left:1574.3px;top:628.8px;width:73.0px;height:27.0px;background:#f0f0f0;border-top:1px solid #fff;border-left:1px solid #fff;border-right:2px solid #8f8f8f;border-bottom:2px solid #8f8f8f"></div>
<div class="t" style="left:1578.80px;top:633.45px;font-size:16px;color:#1a1a1a;font-weight:normal;font-family:'Liberation Sans',sans-serif;">Error ...</div>
<div class="a" style="left:1647.3px;top:628.8px;width:72.20000000000005px;height:27.0px;background:#f0f0f0;border-top:1px solid #fff;border-left:1px solid #fff;border-right:2px solid #8f8f8f;border-bottom:2px solid #8f8f8f"></div>
<div class="t" style="left:1651.80px;top:633.45px;font-size:16px;color:#1a1a1a;font-weight:normal;font-family:'Liberation Sans',sans-serif;">Comm...</div>
<div class="a" style="left:10px;top:968px;width:475px;height:25px;background:#f0f0f0;border-top:2px solid #8a8a8a;border-left:2px solid #8a8a8a;border-bottom:1.5px solid #fff;border-right:1.5px solid #fff"></div>
<div class="a" style="left:506.3px;top:968px;width:339.7px;height:25px;background:#f0f0f0;border-top:2px solid #8a8a8a;border-left:2px solid #8a8a8a;border-bottom:1.5px solid #fff;border-right:1.5px solid #fff"></div>
<div class="t" style="left:511.80px;top:972.50px;font-size:16.3px;color:#1a1a1a;font-weight:normal;font-family:'Liberation Sans',sans-serif;">Placements: 0 / 0 Total | 0 / 0 Selected Board</div>
<div class="a" style="left:855.6px;top:969px;width:299.6px;height:21.700000000000045px;background:#e6e6e6;border:1px solid #bcbcbc"></div>
<div class="a" style="left:855.6px;top:969.8px;width:3.199999999999932px;height:20.0px;background:#0078d7"></div>
<div class="t" style="left:703.50px;width:600px;text-align:center;top:969.85px;font-size:16px;color:#2a78d6;font-weight:normal;font-family:'Liberation Sans',sans-serif;">0%</div>
<div class="a" style="left:1164.8px;top:965.5px;width:569.7px;height:29.5px;background:#bfffbf;border-top:2.5px solid #6c8c6c;border-left:2.5px solid #6c8c6c;border-bottom:3px solid #fff;border-right:3px solid #fff"></div>
<div class="t" style="left:1166.70px;top:974.01px;font-size:18px;color:#222;font-weight:normal;font-family:'Liberation Mono',monospace;letter-spacing:1.1px">X:216.527</div>
<div class="t" style="left:1312.20px;top:974.01px;font-size:18px;color:#222;font-weight:normal;font-family:'Liberation Mono',monospace;letter-spacing:1.1px">Y:73.950</div>
<div class="t" style="left:1456.00px;top:974.01px;font-size:18px;color:#222;font-weight:normal;font-family:'Liberation Mono',monospace;letter-spacing:1.1px">Z:0.000</div>
<div class="t" style="left:1598.80px;top:974.01px;font-size:18px;color:#222;font-weight:normal;font-family:'Liberation Mono',monospace;letter-spacing:1.1px">C:0.000</div>
<svg style="left:0;top:0" width="1743" height="1003" viewBox="0 0 1743 1003"><path d="M1011.2 239.3 L1011.2 262.5 L1016.3 257.6 L1020.6 266.4 L1024.4 264.6 L1020.2 256.2 L1027.3 256.2 Z" fill="#fff" stroke="#000" stroke-width="1.1" stroke-linejoin="miter"/><rect x="833.8" y="228.8" width="897.2" height="42.2" rx="7" ry="7" fill="none" stroke="#ff0000" stroke-width="11.5"/><line x1="891" y1="508" x2="937" y2="305" stroke="#ff0000" stroke-width="11.5"/><path d="M945.2 276.3 L911.2 325.7 L953.5 336 Z" fill="#ff0000"/></svg>
</body></html>
